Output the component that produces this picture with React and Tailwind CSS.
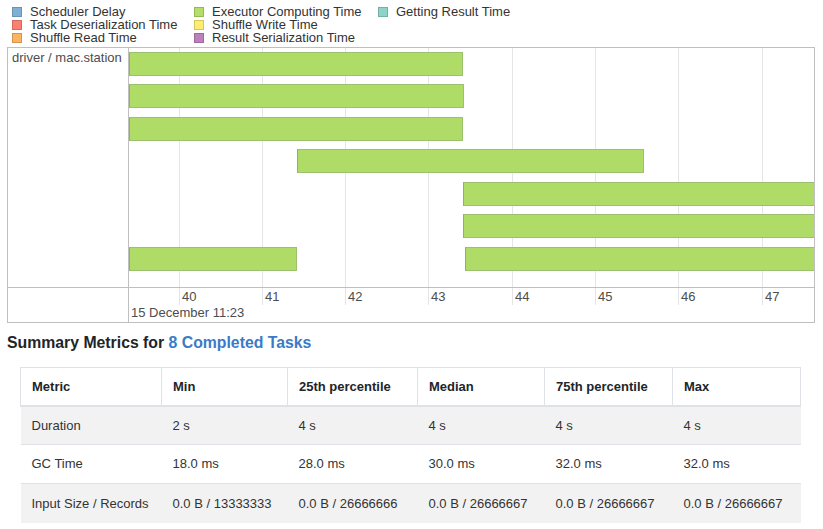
import React from 'react';

const legend = [
  { label: 'Scheduler Delay', fill: 'bg-[#80B1D3]', stroke: 'border-[#6B94B0]' },
  { label: 'Task Deserialization Time', fill: 'bg-[#FB8072]', stroke: 'border-[#D26B5F]' },
  { label: 'Shuffle Read Time', fill: 'bg-[#FDB462]', stroke: 'border-[#D39651]' },
  { label: 'Executor Computing Time', fill: 'bg-[#B3DE69]', stroke: 'border-[#95B957]' },
  { label: 'Shuffle Write Time', fill: 'bg-[#FFED6F]', stroke: 'border-[#D5C65C]' },
  { label: 'Result Serialization Time', fill: 'bg-[#BC80BD]', stroke: 'border-[#9D6B9E]' },
  { label: 'Getting Result Time', fill: 'bg-[#8DD3C7]', stroke: 'border-[#75B0A6]' },
];

// timeline scale: px per second, and offset of second "40" inside the center panel
const PX = 83.33;
const T40 = 49.5;
const xOf = (t) => T40 + (t - 40) * PX;

// start / end in seconds, row index
const tasks = [
  { row: 0, start: 39.406, end: 43.414 },
  { row: 1, start: 39.406, end: 43.426 },
  { row: 2, start: 39.406, end: 43.414 },
  { row: 3, start: 41.422, end: 45.586 },
  { row: 4, start: 43.414, end: 47.7 },
  { row: 5, start: 43.418, end: 47.7 },
  { row: 6, start: 39.406, end: 41.422 },
  { row: 6, start: 43.438, end: 47.7 },
];

const ticks = [40, 41, 42, 43, 44, 45, 46, 47];

const metrics = [
  ['Duration', '2 s', '4 s', '4 s', '4 s', '4 s'],
  ['GC Time', '18.0 ms', '28.0 ms', '30.0 ms', '32.0 ms', '32.0 ms'],
  ['Input Size / Records', '0.0 B / 13333333', '0.0 B / 26666666', '0.0 B / 26666667', '0.0 B / 26666667', '0.0 B / 26666667'],
];

const headers = ['Metric', 'Min', '25th percentile', 'Median', '75th percentile', 'Max'];
const colWidths = ['w-[141px]', 'w-[126px]', 'w-[130px]', 'w-[127px]', 'w-[128px]', 'w-[128px]'];

const App = () => {
  return (
    <div className="w-[823px] h-[529px] overflow-hidden bg-white text-[13px] text-[#333] font-['Liberation_Sans',Arial,sans-serif]">
      {/* Legend */}
      <div className="grid grid-flow-col grid-rows-3 grid-cols-[182px_184px_auto] pl-[12px] pt-[5px] leading-[13px]">
        {legend.map((l) => (
          <div key={l.label} className="flex items-center gap-[8px]">
            <span className={`w-[10px] h-[10px] border ${l.fill} ${l.stroke}`}></span>
            <span className="text-[#333]">{l.label}</span>
          </div>
        ))}
      </div>

      {/* Timeline */}
      <div className="mt-[3px] ml-[7px] w-[808px] border border-[#bfbfbf] flex flex-col">
        <div className="flex h-[240px] border-b border-[#bfbfbf]">
          <div className="w-[121px] border-r border-[#bfbfbf] pl-[4px] pt-[3px] leading-[13px] text-[#4d4d4d]">
            driver / mac.station
          </div>
          <div className="relative flex-1 overflow-hidden">
            {ticks.map((t) => (
              <div
                key={t}
                className="absolute top-0 bottom-0 w-px bg-[#e5e5e5]"
                style={{ left: Math.round(xOf(t)) }}
              ></div>
            ))}
            {tasks.map((task, i) => (
              <div
                key={i}
                className="absolute h-[24px] bg-[#afdc67] border border-[#9cbf70] border-l-[#8fb35a]"
                style={{
                  top: Math.round(3.5 + task.row * 32.5),
                  left: Math.round(xOf(task.start)),
                  width: Math.round((task.end - task.start) * PX),
                }}
              ></div>
            ))}
          </div>
        </div>
        <div className="flex h-[34px] text-[#4d4d4d]">
          <div className="w-[121px] border-r border-[#bfbfbf]"></div>
          <div className="relative flex-1 overflow-hidden">
            {ticks.map((t) => (
              <div key={t} className="absolute top-0 h-[17px] flex" style={{ left: Math.round(xOf(t)) }}>
                <div className="w-px h-full bg-[#e5e5e5]"></div>
                <span className="pl-[2px] pt-[1px] leading-[16px]">{t}</span>
              </div>
            ))}
            <div className="absolute left-[2px] top-[17px] leading-[16px]">15 December 11:23</div>
          </div>
        </div>
      </div>

      {/* Summary */}
      <h4 className="mt-[10px] ml-[7px] text-[15.8px] font-bold leading-[20px] text-[#212529]">
        Summary Metrics for <a className="text-[#3a7bc8]">8 Completed Tasks</a>
      </h4>

      <table className="mt-[14px] ml-[20px] w-[780px] table-fixed border-collapse">
        <thead>
          <tr className="h-[38px]">
            {headers.map((h, i) => (
              <th
                key={h}
                className={`${colWidths[i]} px-[11px] text-left font-bold text-[#212529] border border-[#dee2e6] border-b-2`}
              >
                {h}
              </th>
            ))}
          </tr>
        </thead>
        <tbody>
          {metrics.map((row, r) => (
            <tr key={r} className={`h-[39px] border-t border-[#dee2e6] ${r % 2 === 0 ? 'bg-[#f2f2f2]' : 'bg-white'}`}>
              {row.map((cell, c) => (
                <td key={c} className="px-[11px] text-[#333]">
                  {cell}
                </td>
              ))}
            </tr>
          ))}
        </tbody>
      </table>
    </div>
  );
};

export default App;
